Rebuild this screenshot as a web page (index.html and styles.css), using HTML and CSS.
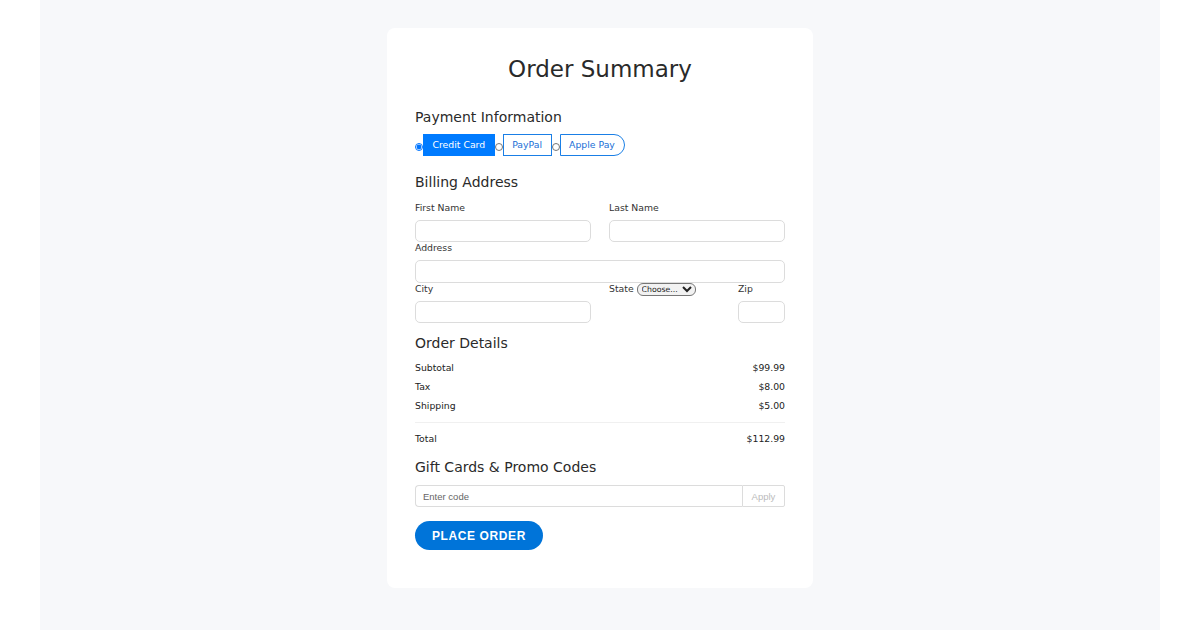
FILE: index.html
```html
<!DOCTYPE html>
<html lang="en">

<head>
    <meta charset="UTF-8">
    <meta name="viewport" content="width=device-width, initial-scale=1.0">
    <title>Order Summary</title>
    <link rel="stylesheet" href="styles.css">
</head>

<body>
    <div class="page">
        <div class="card">
            <h1 class="title">Order Summary</h1>

            <!-- 支付方式 -->
            <h2 class="section-title">Payment Information</h2>
            <div class="pay-group">
                <input type="radio" name="pay" id="pay-card" checked>
                <label class="pay-btn active" for="pay-card">Credit Card</label>
                <input type="radio" name="pay" id="pay-paypal">
                <label class="pay-btn" for="pay-paypal">PayPal</label>
                <input type="radio" name="pay" id="pay-apple">
                <label class="pay-btn last" for="pay-apple">Apple Pay</label>
            </div>

            <!-- 账单地址 -->
            <h2 class="section-title billing">Billing Address</h2>
            <div class="row two">
                <div class="field">
                    <label class="field-label" for="first">First Name</label>
                    <input class="text-input" type="text" id="first">
                </div>
                <div class="field">
                    <label class="field-label" for="last">Last Name</label>
                    <input class="text-input" type="text" id="last">
                </div>
            </div>
            <div class="field">
                <label class="field-label" for="address">Address</label>
                <input class="text-input" type="text" id="address">
            </div>
            <div class="row three">
                <div class="field">
                    <label class="field-label" for="city">City</label>
                    <input class="text-input" type="text" id="city">
                </div>
                <div class="field">
                    <label class="field-label" for="state">State <select id="state" class="state-select">
                        <option>Choose...</option>
                    </select></label>
                </div>
                <div class="field">
                    <label class="field-label" for="zip">Zip</label>
                    <input class="text-input" type="text" id="zip">
                </div>
            </div>

            <!-- 订单明细 -->
            <h2 class="section-title details">Order Details</h2>
            <div class="line-item"><span>Subtotal</span><span>$99.99</span></div>
            <div class="line-item"><span>Tax</span><span>$8.00</span></div>
            <div class="line-item"><span>Shipping</span><span>$5.00</span></div>
            <hr class="divider">
            <div class="line-item total"><span>Total</span><span>$112.99</span></div>

            <!-- 礼品卡 -->
            <h2 class="section-title gift">Gift Cards &amp; Promo Codes</h2>
            <div class="promo">
                <input class="promo-input" type="text" placeholder="Enter code">
                <button class="promo-btn">Apply</button>
            </div>

            <button class="place-btn">PLACE ORDER</button>
        </div>
    </div>
</body>

</html>
```

FILE: styles.css
```css
  /* 整体页面 */
  body {
      margin: 0;
      padding: 0;
      background-color: #fff;
      font-family: "DejaVu Sans", sans-serif;
      color: #333;
  }

  .page {
      max-width: 1120px;
      margin: 0 auto;
      min-height: 100vh;
      background-color: #f7f8fa;
      padding: 28px 0;
      box-sizing: border-box;
  }

  /* 卡片 */
  .card {
      width: 426px;
      margin: 0 auto;
      background-color: #fff;
      border-radius: 8px;
      padding: 28px 28px 38px;
      box-sizing: border-box;
  }

  .title {
      margin: 0 0 26px;
      font-size: 23px;
      line-height: 27px;
      font-weight: normal;
      text-align: center;
      color: #2a2a2a;
  }

  .section-title {
      margin: 0 0 9px;
      font-size: 14px;
      line-height: 16px;
      font-weight: normal;
      color: #2a2a2a;
  }

  .billing {
      margin-top: 18px;
      margin-bottom: 11.5px;
  }

  .details {
      margin-top: 12px;
      margin-bottom: 10.5px;
  }

  .gift {
      margin-top: 15.5px;
      margin-bottom: 10px;
  }

  /* 支付按钮组 */
  .pay-group {
      display: flex;
      align-items: center;
      height: 22px;
  }

  .pay-group input {
      width: 8px;
      height: 8px;
      margin: 4px 0 0;
  }

  .pay-btn {
      height: 22px;
      box-sizing: border-box;
      padding: 0 8.5px;
      border: 1px solid #1a7fe6;
      color: #1a6fd6;
      font-size: 9.3px;
      line-height: 20px;
      cursor: pointer;
  }

  .pay-btn.active {
      background-color: #007bff;
      border-color: #007bff;
      color: #fff;
  }

  .pay-btn.last {
      padding-right: 9.5px;
      border-radius: 0 11px 11px 0;
  }

  /* 表单 */
  .row {
      display: grid;
      column-gap: 18px;
  }

  .row.two {
      grid-template-columns: 1fr 1fr;
  }

  .row.three {
      grid-template-columns: 176px 111px 47px;
  }

  .field {
      display: flex;
      flex-direction: column;
  }

  .field-label {
      font-size: 9.3px;
      line-height: 11px;
      margin-bottom: 7px;
      color: #333;
      white-space: nowrap;
  }

  .text-input {
      height: 22.5px;
      box-sizing: border-box;
      border: 1px solid #dcdcdc;
      border-radius: 5px;
      padding: 0 6px;
      width: 100%;
  }

  .state-select {
      font-family: "DejaVu Sans", sans-serif;
      font-size: 7.8px;
      margin: 0;
      padding: 0;
      border: 1px solid #767676;
      border-radius: 6px;
      background-color: #f2f2f2;
      color: #222;
      vertical-align: top;
  }

  /* 订单明细 */
  .line-item {
      display: flex;
      justify-content: space-between;
      font-size: 9.3px;
      line-height: 11px;
      margin-bottom: 8px;
      color: #222;
  }

  .line-item:nth-of-type(3) {
      margin-bottom: 0;
  }

  .divider {
      border: none;
      border-top: 1px solid #f0f0f0;
      margin: 11px 0 10px;
  }

  .line-item.total {
      margin-bottom: 0;
  }

  /* 优惠码 */
  .promo {
      display: flex;
      height: 22px;
  }

  .promo-input {
      flex: 1;
      box-sizing: border-box;
      border: 1px solid #dcdcdc;
      border-right: none;
      border-radius: 4px 0 0 4px;
      padding: 0 7px;
      font-family: "Liberation Sans", sans-serif;
      font-size: 9.5px;
      margin: 0;
  }

  .promo-input::placeholder {
      color: #666;
  }

  .promo-btn {
      width: 43px;
      box-sizing: border-box;
      border: 1px solid #dcdcdc;
      border-radius: 0 2px 2px 0;
      background-color: #fff;
      color: #bbb;
      font-family: "Liberation Sans", sans-serif;
      font-size: 9.5px;
      padding: 0;
      margin: 0;
  }

  /* 下单按钮 */
  .place-btn {
      display: block;
      margin-top: 14px;
      width: 128px;
      height: 29px;
      border: none;
      border-radius: 15px;
      background-color: #0074d9;
      color: #fff;
      font-family: "Liberation Sans", sans-serif;
      font-weight: bold;
      font-size: 12px;
      letter-spacing: 0.6px;
      padding: 0;
      cursor: pointer;
  }
```
